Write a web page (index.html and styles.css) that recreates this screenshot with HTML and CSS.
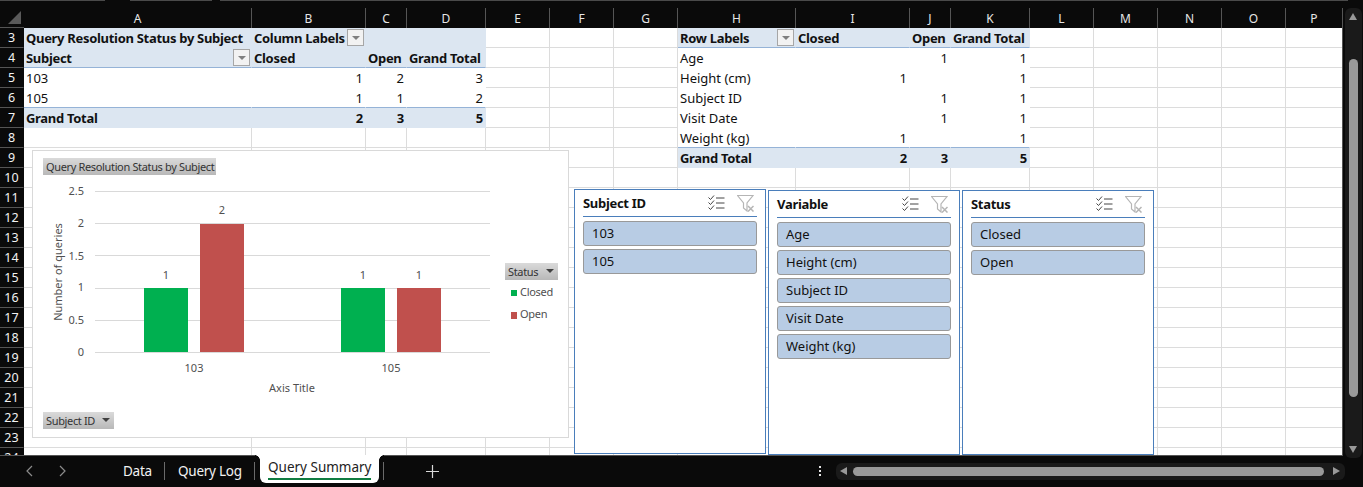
FILE: index.html
```html
<!DOCTYPE html>
<html lang="en">

<head>
    <meta charset="UTF-8">
    <meta name="viewport" content="width=device-width, initial-scale=1.0">
    <title>Query Summary</title>
    <link rel="stylesheet" href="styles.css">
</head>

<body>

    <div class="topstrip"></div>

    <div class="workarea">
        <div class="sheet">
            <table id="grid" class="grid">
                <colgroup id="grid-cols"></colgroup>
                <thead>
                    <tr id="col-heads"></tr>
                </thead>
                <tbody></tbody>
            </table>

            <!-- Pivot chart floats over the cells -->
            <div class="chart">
                <svg class="chart-svg" width="537" height="288" viewBox="32 150 537 288">
                    <g class="gridlines">
                        <line x1="95" x2="490" y1="191.5" y2="191.5"></line>
                        <line x1="95" x2="490" y1="223.5" y2="223.5"></line>
                        <line x1="95" x2="490" y1="255.5" y2="255.5"></line>
                        <line x1="95" x2="490" y1="288.5" y2="288.5"></line>
                        <line x1="95" x2="490" y1="320.5" y2="320.5"></line>
                        <line x1="95" x2="490" y1="352.5" y2="352.5"></line>
                    </g>
                    <rect class="bar-closed" x="144" y="288" width="44" height="64"></rect>
                    <rect class="bar-open" x="200" y="224" width="44" height="128"></rect>
                    <rect class="bar-closed" x="341" y="288" width="44" height="64"></rect>
                    <rect class="bar-open" x="397" y="288" width="44" height="64"></rect>
                    <g class="ticks">
                        <text x="84" y="195">2.5</text>
                        <text x="84" y="227">2</text>
                        <text x="84" y="260">1.5</text>
                        <text x="84" y="291">1</text>
                        <text x="84" y="324">0.5</text>
                        <text x="84" y="356">0</text>
                    </g>
                    <g class="labels">
                        <text x="166" y="279">1</text>
                        <text x="222" y="214">2</text>
                        <text x="363" y="279">1</text>
                        <text x="419" y="279">1</text>
                        <text x="194" y="372">103</text>
                        <text x="391" y="372">105</text>
                        <text x="292" y="392">Axis Title</text>
                        <text class="axis-y" transform="translate(62 272) rotate(-90)">Number of queries</text>
                    </g>
                    <rect class="bar-closed" x="511" y="290" width="6" height="6"></rect>
                    <rect class="bar-open" x="511" y="312" width="6" height="7"></rect>
                    <text class="legend-text" x="520" y="296">Closed</text>
                    <text class="legend-text" x="520" y="318">Open</text>
                </svg>
                <div class="tag tag-title">Query Resolution Status by Subject</div>
                <div class="tag tag-status">Status<span class="tag-arrow"></span></div>
                <div class="tag tag-subject">Subject ID<span class="tag-arrow"></span></div>
            </div>

            <!-- Slicers -->
            <div class="slicers">
                <div class="slicer slicer-first">
                    <div class="slicer-head">
                        <span class="slicer-title">Subject ID</span>
                        <svg class="icon-multi" width="17" height="16" viewBox="0 0 17 16">
                            <path d="M0.5 2.5l2 2 3.5-4M0.5 7.5l2 2 3.5-4M0.5 12.5l2 2 3.5-4"></path>
                            <path d="M8 3h8.500M8 8h8.500M8 13h8.500"></path>
                        </svg>
                        <svg class="icon-clear" width="17" height="17" viewBox="0 0 17 17">
                            <path class="funnel" d="M0.500 0.500h15.500l-6 7.500v8l-3.500-3v-5z"></path>
                            <path class="cross" d="M11 11l5.500 5.500M16.500 11l-5.500 5.500"></path>
                        </svg>
                    </div>
                    <div class="slicer-item">103</div>
                    <div class="slicer-item">105</div>
                </div>
                <div class="slicer">
                    <div class="slicer-head">
                        <span class="slicer-title">Variable</span>
                        <svg class="icon-multi" width="17" height="16" viewBox="0 0 17 16">
                            <path d="M0.5 2.5l2 2 3.5-4M0.5 7.5l2 2 3.5-4M0.5 12.5l2 2 3.5-4"></path>
                            <path d="M8 3h8.500M8 8h8.500M8 13h8.500"></path>
                        </svg>
                        <svg class="icon-clear" width="17" height="17" viewBox="0 0 17 17">
                            <path class="funnel" d="M0.500 0.500h15.500l-6 7.500v8l-3.500-3v-5z"></path>
                            <path class="cross" d="M11 11l5.500 5.500M16.500 11l-5.500 5.500"></path>
                        </svg>
                    </div>
                    <div class="slicer-item">Age</div>
                    <div class="slicer-item">Height (cm)</div>
                    <div class="slicer-item">Subject ID</div>
                    <div class="slicer-item">Visit Date</div>
                    <div class="slicer-item">Weight (kg)</div>
                </div>
                <div class="slicer">
                    <div class="slicer-head">
                        <span class="slicer-title">Status</span>
                        <svg class="icon-multi" width="17" height="16" viewBox="0 0 17 16">
                            <path d="M0.5 2.5l2 2 3.5-4M0.5 7.5l2 2 3.5-4M0.5 12.5l2 2 3.5-4"></path>
                            <path d="M8 3h8.500M8 8h8.500M8 13h8.500"></path>
                        </svg>
                        <svg class="icon-clear" width="17" height="17" viewBox="0 0 17 17">
                            <path class="funnel" d="M0.500 0.500h15.500l-6 7.500v8l-3.500-3v-5z"></path>
                            <path class="cross" d="M11 11l5.500 5.500M16.500 11l-5.500 5.500"></path>
                        </svg>
                    </div>
                    <div class="slicer-item">Closed</div>
                    <div class="slicer-item">Open</div>
                </div>
            </div>
        </div>

        <div class="vscroll">
            <span class="arrow-up"></span>
            <div class="vthumb"></div>
            <span class="arrow-down"></span>
        </div>
    </div>

    <div class="tabbar">
        <div class="tabnav">
            <svg width="9" height="12" viewBox="0 0 9 12"><path d="M7 1L2 6l5 5"></path></svg>
            <svg width="9" height="12" viewBox="0 0 9 12"><path d="M2 1l5 5-5 5"></path></svg>
        </div>
        <div class="tab tab-data">Data</div>
        <div class="tab-sep"></div>
        <div class="tab tab-log">Query Log</div>
        <div class="tab-sep"></div>
        <div class="tab tab-active"><span>Query Summary</span></div>
        <div class="tab-sep tab-sep-after"></div>
        <svg class="tab-add" width="13" height="13" viewBox="0 0 13 13"><path d="M6.500 0v13M0 6.500h13"></path></svg>
        <div class="tab-dots"><i></i><i></i><i></i></div>
        <div class="hscroll">
            <span class="arrow-left"></span>
            <div class="hthumb"></div>
            <span class="arrow-right"></span>
        </div>
    </div>

    <script>
        const columns = [
            ['A', 228], ['B', 114], ['C', 41], ['D', 79], ['E', 64], ['F', 64], ['G', 64], ['H', 118],
            ['I', 114], ['J', 41], ['K', 79], ['L', 64], ['M', 64], ['N', 64], ['O', 64], ['P', 57]
        ];

        // cell text by address; r = right aligned, rh = right aligned caption, b = bold, f = filter button
        const fill = 'head', plain = 'pivot';
        const pivotRows = {
            3: { A: ['Query Resolution Status by Subject', fill + ' b'], B: ['Column Labels', fill + ' b f'], C: ['', fill], D: ['', fill],
                 H: ['Row Labels', fill + ' b f line'], I: ['Closed', fill + ' b line'], J: ['Open', fill + ' b rh line'], K: ['Grand Total', fill + ' b rh line'] },
            4: { A: ['Subject', fill + ' b f line'], B: ['Closed', fill + ' b line'], C: ['Open', fill + ' b rh line'], D: ['Grand Total', fill + ' b rh line'],
                 H: ['Age', plain], I: ['', plain], J: ['1', plain + ' r'], K: ['1', plain + ' r'] },
            5: { A: ['103', plain], B: ['1', plain + ' r'], C: ['2', plain + ' r'], D: ['3', plain + ' r'],
                 H: ['Height (cm)', plain], I: ['1', plain + ' r'], J: ['', plain], K: ['1', plain + ' r'] },
            6: { A: ['105', plain + ' line'], B: ['1', plain + ' r line'], C: ['1', plain + ' r line'], D: ['2', plain + ' r line'],
                 H: ['Subject ID', plain], I: ['', plain], J: ['1', plain + ' r'], K: ['1', plain + ' r'] },
            7: { A: ['Grand Total', fill + ' b'], B: ['2', fill + ' b r'], C: ['3', fill + ' b r'], D: ['5', fill + ' b r'],
                 H: ['Visit Date', plain], I: ['', plain], J: ['1', plain + ' r'], K: ['1', plain + ' r'] },
            8: { H: ['Weight (kg)', plain + ' line'], I: ['1', plain + ' r line'], J: ['', plain + ' line'], K: ['1', plain + ' r line'] },
            9: { H: ['Grand Total', fill + ' b'], I: ['2', fill + ' b r'], J: ['3', fill + ' b r'], K: ['5', fill + ' b r'] }
        };

        const colgroup = document.getElementById('grid-cols');
        const headRow = document.getElementById('col-heads');
        const tableBody = document.querySelector('#grid tbody');

        const cornerCol = document.createElement('col');
        cornerCol.style.width = '24px';
        colgroup.appendChild(cornerCol);
        const corner = document.createElement('th');
        corner.className = 'corner';
        headRow.appendChild(corner);

        columns.forEach(col => {
            const c = document.createElement('col');
            c.style.width = col[1] + 'px';
            colgroup.appendChild(c);
            const th = document.createElement('th');
            th.className = 'col-head';
            th.textContent = col[0];
            headRow.appendChild(th);
        });

        for (let n = 3; n <= 24; n++) {
            const row = document.createElement('tr');
            const num = document.createElement('th');
            num.className = 'row-head';
            num.textContent = n;
            row.appendChild(num);

            columns.forEach(col => {
                const td = document.createElement('td');
                const cell = (pivotRows[n] || {})[col[0]];
                if (cell) {
                    td.className = cell[1];
                    td.textContent = cell[0];
                    if (cell[1].includes(' f')) {
                        const btn = document.createElement('span');
                        btn.className = 'filter-btn';
                        td.appendChild(btn);
                    }
                }
                row.appendChild(td);
            });
            tableBody.appendChild(row);
        }
    </script>

</body>

</html>
```

FILE: styles.css
```css
* {
    box-sizing: border-box;
}

html,
body {
    height: 100%;
}

body {
    margin: 0;
    width: 1363px;
    height: 487px;
    overflow: hidden;
    background-color: #0a0a0a;
    font-family: "Noto Sans", sans-serif;
    font-size: 13px;
    color: #111;
    display: flex;
    flex-direction: column;
}

.topstrip {
    height: 8px;
    flex: none;
    background: linear-gradient(to right, #4a4a4a 105px, transparent 105px, transparent 130px, #4a4a4a 130px, #4a4a4a 212px, transparent 212px, transparent 220px, #4a4a4a 220px, #4a4a4a 1348px, transparent 1348px) no-repeat;
    background-size: 100% 1px;
}

.workarea {
    display: flex;
    height: 447px;
    flex: none;
}

.sheet {
    position: relative;
    width: 1343px;
    height: 448px;
    overflow: hidden;
    background-color: white;
    border-right: 1px solid #555;
    border-bottom: 1px solid #555;
    flex: none;
}

/* Grid */
.grid {
    table-layout: fixed;
    width: 1343px;
    border-collapse: separate;
    border-spacing: 0;
}

.grid tr {
    height: 20px;
}

.corner {
    background-color: #0a0a0a;
    position: relative;
    border-bottom: 1px solid #555;
}

.corner::after {
    content: "";
    position: absolute;
    right: 3px;
    bottom: 3px;
    border-style: solid;
    border-width: 0 0 13px 13px;
    border-color: transparent transparent #5a5a5a transparent;
}

.col-head {
    background-color: #0a0a0a;
    color: #e6e6e6;
    font-weight: 400;
    font-size: 12px;
    padding: 0;
    height: 20px;
    border-right: 1px solid #555;
}

.row-head {
    background-color: #0a0a0a;
    color: #f2f2f2;
    font-weight: 400;
    font-size: 12.500px;
    padding: 0;
    height: 20px;
    border-bottom: 1px solid #555;
    border-right: 1px solid #0a0a0a;
}

td {
    height: 20px;
    padding: 0 2px;
    border-right: 1px solid #dcdcdc;
    border-bottom: 1px solid #dcdcdc;
    white-space: nowrap;
    overflow: hidden;
    position: relative;
}

td.head {
    background-color: #dce6f1;
    border-color: #dce6f1;
}

td.pivot {
    border-right-color: white;
    border-bottom-color: white;
}

td.line {
    border-bottom-color: #95b3d7;
}

td.b {
    font-weight: 700;
    letter-spacing: -0.3px;
}

td.r {
    text-align: right;
    padding-right: 2px;
}

td.rh {
    text-align: right;
    padding-right: 5px;
}

.filter-btn {
    position: absolute;
    right: 1px;
    top: 1px;
    width: 17px;
    height: 17px;
    background-color: #f2f2f2;
    border: 1px solid #a6a6a6;
}

.filter-btn::after {
    content: "";
    position: absolute;
    left: 4px;
    top: 6px;
    border-style: solid;
    border-width: 4px 4px 0 4px;
    border-color: #7f7f7f transparent transparent transparent;
}

/* Chart */
.chart {
    position: absolute;
    left: 32px;
    top: 142px;
    width: 537px;
    height: 288px;
    background-color: white;
    border: 1px solid #d9d9d9;
}

.chart-svg {
    position: absolute;
    left: -1px;
    top: -1px;
    font-family: "Noto Sans", sans-serif;
    font-size: 11px;
    fill: #505050;
}

.gridlines line {
    stroke: #d9d9d9;
    stroke-width: 1;
}

.bar-closed {
    fill: #00b050;
}

.bar-open {
    fill: #c0504d;
}

.ticks text {
    text-anchor: end;
}

.labels text {
    text-anchor: middle;
}

.legend-text {
    letter-spacing: -0.3px;
}

.tag {
    position: absolute;
    height: 17px;
    line-height: 17px;
    padding-left: 3px;
    font-size: 11px;
    letter-spacing: -0.35px;
    color: #333;
    background: linear-gradient(#dadada, #b8b8b8);
    white-space: nowrap;
}

.tag-title {
    left: 10px;
    top: 7px;
    width: 173px;
}

.tag-status {
    left: 472px;
    top: 112px;
    width: 53px;
}

.tag-subject {
    left: 10px;
    top: 261px;
    width: 71px;
}

.tag-arrow {
    position: absolute;
    right: 4px;
    top: 6px;
    border-style: solid;
    border-width: 4px 4px 0 4px;
    border-color: #404040 transparent transparent transparent;
}

/* Slicers */
.slicers {
    position: absolute;
    left: 574px;
    top: 182px;
    display: flex;
    gap: 2px;
}

.slicer {
    width: 192px;
    height: 265px;
    background-color: white;
    border: 1px solid #4a7ebb;
    padding: 0 8px;
}

.slicer-first {
    margin-top: -1px;
    height: 265px;
}

.slicer-head {
    display: flex;
    align-items: center;
    height: 27px;
    border-bottom: 1px solid #4a7ebb;
    margin-bottom: 4px;
}

.slicer-title {
    font-weight: 700;
    letter-spacing: -0.3px;
    flex: 1;
}

.icon-multi {
    margin-right: 12px;
}

.icon-multi path {
    fill: none;
    stroke: #444;
    stroke-width: 1;
}

.icon-clear {
    margin-right: 3px;
}

.icon-clear .funnel {
    fill: none;
    stroke: #b5b5b5;
    stroke-width: 1.200;
}

.icon-clear .cross {
    stroke: #b5b5b5;
    stroke-width: 1.500;
}

.slicer-item {
    height: 25px;
    line-height: 23px;
    margin-bottom: 3px;
    padding-left: 8px;
    background-color: #b8cce4;
    border: 1px solid #999;
    border-radius: 3px;
}

/* Scrollbars */
.vscroll {
    position: relative;
    width: 17px;
    margin-left: 2px;
    height: 450px;
    border-radius: 6px;
    background-color: #1a1a1a;
    flex: none;
}

.arrow-up,
.arrow-down,
.arrow-left,
.arrow-right {
    position: absolute;
    border-style: solid;
    width: 0;
    height: 0;
}

.arrow-up {
    top: 5px;
    left: 4px;
    border-width: 0 4.500px 7px 4.500px;
    border-color: transparent transparent #999 transparent;
}

.arrow-down {
    bottom: 5px;
    left: 4px;
    border-width: 7px 4.500px 0 4.500px;
    border-color: #999 transparent transparent transparent;
}

.vthumb {
    position: absolute;
    top: 51px;
    left: 4px;
    width: 9px;
    height: 338px;
    border-radius: 5px;
    background-color: #999;
}

/* Tab bar */
.tabbar {
    display: flex;
    align-items: center;
    height: 32px;
    flex: none;
    color: #f2f2f2;
    font-size: 13.500px;
}

.tabnav {
    display: flex;
    gap: 24px;
    margin-left: 25px;
    width: 98px;
}

.tabnav path,
.tab-add path {
    fill: none;
    stroke: #8c8c8c;
    stroke-width: 1.200;
}

.tab-add path {
    stroke: #d9d9d9;
}

.tab-data {
    width: 41px;
    letter-spacing: -0.25px;
}

.tab-sep {
    width: 1px;
    height: 18px;
    background-color: #6a6a6a;
    flex: none;
}

.tab-log {
    width: 89px;
    padding-left: 13px;
    letter-spacing: -0.25px;
}

.tab-active {
    position: relative;
    width: 119px;
    height: 28px;
    margin-left: 5px;
    margin-bottom: 4px;
    background-color: white;
    color: #222;
    border-radius: 0 0 6px 6px;
    padding: 0 8px;
    line-height: 25px;
}

.tab-active span {
    display: block;
    height: 25px;
    border-bottom: 2px solid #107c41;
    white-space: nowrap;
}

/* dark bar curves into the white tab at its top corners */
.tab-active::before,
.tab-active::after {
    content: "";
    position: absolute;
    top: 0;
    width: 5px;
    height: 5px;
}

.tab-active::before {
    left: -5px;
    background: radial-gradient(circle at 0 100%, #0a0a0a 4.500px, white 5px);
}

.tab-active::after {
    right: -5px;
    background: radial-gradient(circle at 100% 100%, #0a0a0a 4.500px, white 5px);
}

.tab-sep-after {
    margin-left: 4px;
}

.tab-add {
    margin-left: 42px;
    flex: none;
}

.tab-dots {
    display: flex;
    flex-direction: column;
    gap: 2px;
    margin-left: 380px;
}

.tab-dots i {
    display: block;
    width: 2px;
    height: 2px;
    background-color: #e6e6e6;
}

.hscroll {
    position: relative;
    width: 509px;
    height: 17px;
    margin-left: 15px;
    border-radius: 6px;
    background-color: #1a1a1a;
}

.hthumb {
    position: absolute;
    left: 17px;
    top: 4px;
    width: 471px;
    height: 9px;
    border-radius: 5px;
    background-color: #999;
}

.arrow-left {
    left: 4px;
    top: 4px;
    border-width: 4.500px 7px 4.500px 0;
    border-color: transparent #999 transparent transparent;
}

.arrow-right {
    right: 5px;
    top: 4px;
    border-width: 4.500px 0 4.500px 7px;
    border-color: transparent transparent transparent #999;
}
```
